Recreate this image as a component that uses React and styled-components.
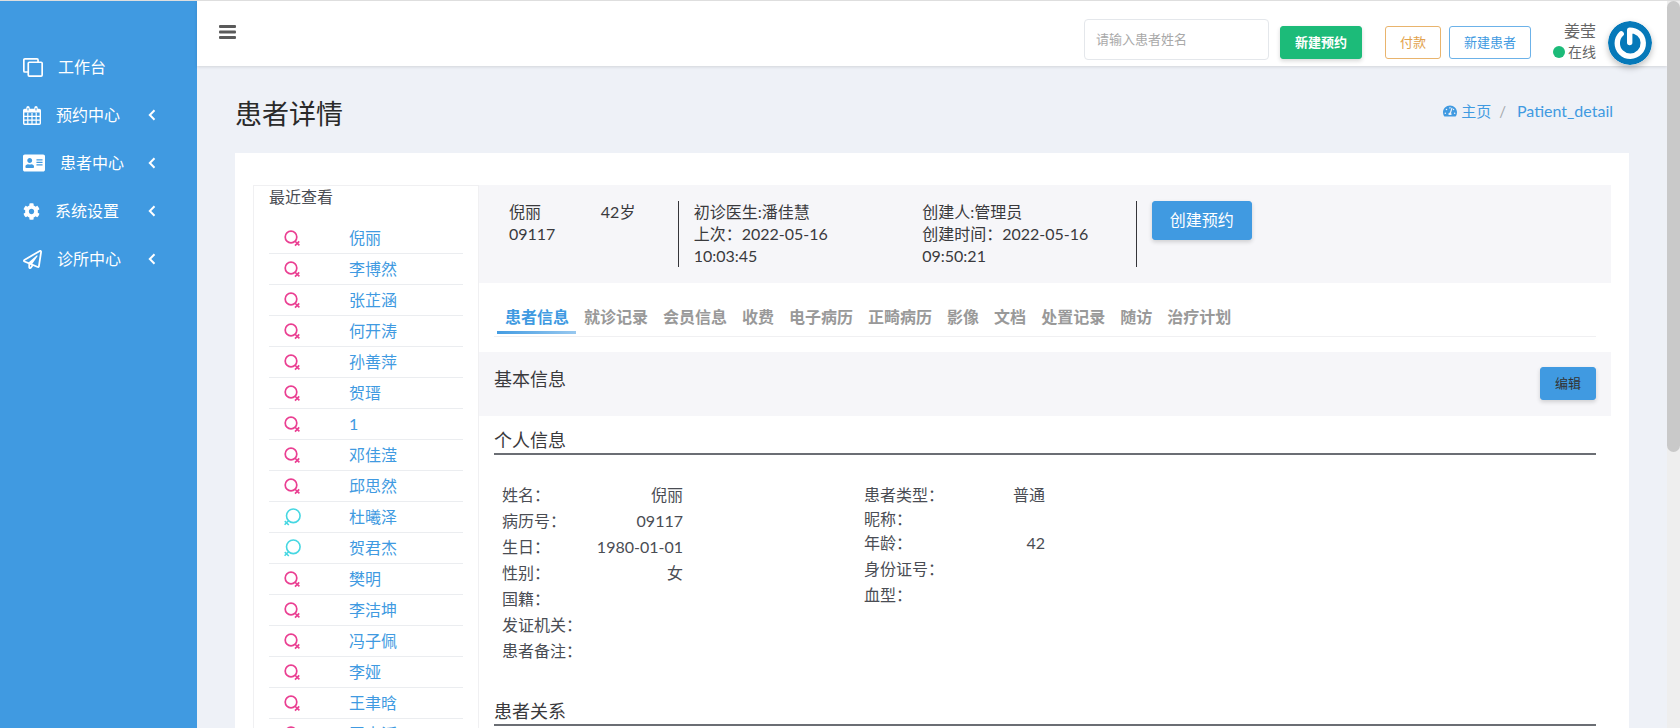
import React from "react";
import styled, { createGlobalStyle } from "styled-components";
import { FaAddressCard, FaCog, FaRegPaperPlane, FaTachometerAlt } from "react-icons/fa";

const GlobalStyle = createGlobalStyle`
  * {
    box-sizing: border-box;
  }

  body {
    margin: 0;
    background: #eef1f7;
    color: #4a4d54;
    font-family: Lato, "Noto Sans CJK SC", sans-serif;
    font-size: 16px;
    line-height: 22px;
  }

  h1, h2, h3, ul, dl, dd {
    margin: 0;
    padding: 0;
    font-weight: 400;
  }

  ul {
    list-style: none;
  }

  a {
    color: #409ae1;
    text-decoration: none;
  }

  button, input {
    font-family: inherit;
  }
`;

const PageStyle = styled.div`
  display: flex;
  height: 100vh;
  overflow: hidden;
  border-top: 1px solid #dedede;
`;

const SidebarStyle = styled.nav`
  flex: 0 0 197px;
  padding-top: 42px;
  background: #409ae1;
`;

const MenuItemStyle = styled.a`
  display: flex;
  align-items: center;
  height: 48px;
  padding: 0 41px 0 23px;
  color: #fff;

  span {
    flex: 1;
    margin-left: 15px;
  }
`;

const ContentStyle = styled.div`
  display: flex;
  flex: 1;
  flex-direction: column;
  min-width: 0;
`;

const HeaderStyle = styled.header`
  display: flex;
  flex: 0 0 65px;
  align-items: center;
  padding: 12px 15px 0 22px;
  background: #fff;
  box-shadow: 0 1px 3px rgba(0, 0, 0, 0.12);
`;

const ToggleStyle = styled.button`
  display: flex;
  margin: 0 auto 16px 0;
  padding: 0;
  border: 0;
  background: none;
`;

const SearchStyle = styled.input`
  width: 185px;
  height: 41px;
  margin-right: 11px;
  padding: 0 11px 2px;
  border: 1px solid #e4e7eb;
  border-radius: 4px;
  font-size: 13px;

  &::placeholder {
    color: #a9a9a9;
  }
`;

const ButtonStyle = styled.button`
  height: ${(props) => (props.$large ? 39 : 33)}px;
  padding: 0 ${(props) => (props.$large ? 17 : 14)}px 3px;
  border: 1px solid ${(props) => props.$border || props.$fill};
  border-radius: 3px;
  background: ${(props) => props.$fill || "#fff"};
  box-shadow: ${(props) => (props.$fill ? "0 2px 4px rgba(0, 0, 0, 0.16)" : "none")};
  color: ${(props) => props.$color};
  font-size: ${(props) => (props.$large ? 16 : 13)}px;
  font-weight: ${(props) => (props.$bold ? 700 : 400)};
  white-space: nowrap;
`;

const ButtonsStyle = styled.div`
  display: flex;
  align-items: center;
  gap: 8px;
  margin: 6px 22px 0 0;

  button:first-child {
    margin-right: 15px;
  }
`;

const UserStyle = styled.div`
  display: flex;
  flex-direction: column;
  align-items: flex-end;
  margin: 3px 12px 0 0;
  color: #666;
  line-height: 21px;
`;

const StatusStyle = styled.span`
  display: flex;
  align-items: center;
  gap: 3px;
  font-size: 14px;

  &::before {
    content: "";
    width: 12px;
    height: 12px;
    border-radius: 50%;
    background: #1cbb79;
  }
`;

const AvatarStyle = styled.svg`
  margin-top: 6px;
  border-radius: 50%;
  box-shadow: 0 3px 6px rgba(0, 0, 0, 0.25);
`;

const MainStyle = styled.main`
  display: flex;
  flex: 1;
  flex-direction: column;
  min-height: 0;
  padding: 0 38px;
`;

const TitleRowStyle = styled.div`
  display: flex;
  flex: 0 0 87px;
  align-items: center;
  justify-content: space-between;
  padding: 8px 16px 0 0;

  h1 {
    color: #2a2a2a;
    font-size: 27px;
    line-height: 32px;
  }
`;

const BreadcrumbStyle = styled.div`
  display: flex;
  align-items: center;
  margin-bottom: 5px;
  color: #a5a9ad;
  font-size: 15px;

  a {
    display: flex;
    align-items: center;
    gap: 4px;
  }

  a:last-child {
    font-size: 16px;
  }

  > span {
    margin: 0 11px 0 8px;
  }
`;

const CardStyle = styled.section`
  display: flex;
  flex: 1;
  align-items: flex-start;
  min-height: 0;
  padding: 32px 18px 0;
  overflow: hidden;
  background: #fff;
`;

const RecentStyle = styled.aside`
  flex: 0 0 226px;
  padding: 0 15px;
  border: 1px solid #f0f0f2;

  h2 {
    margin-bottom: 16px;
    font-size: 16px;
    line-height: 21px;
  }
`;

const RecentRowStyle = styled.li`
  display: flex;
  align-items: center;
  height: 31px;
  padding-left: 15px;
  border-bottom: 1px solid #ebedf0;

  a {
    margin-left: 48px;
  }
`;

const DetailStyle = styled.div`
  flex: 1;
  min-width: 0;
`;

const SummaryStyle = styled.div`
  display: grid;
  grid-template-columns: 1fr 1fr 5fr 5fr;
  padding: 16px 15px;
  background: #f6f6f9;
  color: #3a3a3d;
`;

const SummaryCellStyle = styled.div`
  padding: 0 15px;
`;

const VisitStyle = styled.div`
  display: grid;
  grid-template-columns: 1fr 1fr;
  border: solid #35353a;
  border-width: 0 1px;
`;

const TabsStyle = styled.div`
  display: flex;
  height: 54px;
  margin: 0 15px 15px;
  padding: 17px 3px 2px;
  border-bottom: 1px solid #f0f0f2;
`;

const TabStyle = styled.button`
  padding: 0 7px 0 8px;
  border: 0;
  border-bottom: 3px solid transparent;
  border-image: ${(props) =>
    props.$active ? "linear-gradient(90deg, #409ae1, #9bcaf0) 3" : "none"};
  background: none;
  color: ${(props) => (props.$active ? "#409ae1" : "#999")};
  font-size: 16px;
  font-weight: 700;
  white-space: nowrap;
`;

const SectionBarStyle = styled.div`
  display: flex;
  align-items: flex-start;
  justify-content: space-between;
  height: 64px;
  padding: 15px;
  background: #f6f6f9;

  h2 {
    color: #3a3a3d;
    font-size: 18px;
    line-height: 24px;
  }
`;

const SectionTitleStyle = styled.h3`
  margin: 12px 15px 27px;
  border-bottom: 2px solid #6b6e74;
  color: #3a3a3d;
  font-size: 18px;
  line-height: 25px;
`;

const InfoStyle = styled.div`
  display: grid;
  grid-template-columns: repeat(3, 1fr);
  padding: 0 23px 23px;
`;

const InfoRowStyle = styled.div`
  display: flex;
  align-items: center;
  justify-content: space-between;
  width: 50%;
  min-width: 180px;
  height: ${(props) => (props.$short ? 22 : 26)}px;
  white-space: nowrap;
`;

const ScrollbarStyle = styled.div`
  flex: 0 0 13px;
  background: #eee;

  &::before {
    content: "";
    display: block;
    height: 62%;
    border-radius: 7px;
    background: #c9c9c9;
  }
`;

const CloneIcon = () => (
  <svg width="20" height="19" viewBox="0 0 19 18" fill="none" stroke="currentColor" strokeWidth="1.6">
    <rect x="5" y="4" width="13.2" height="13.2" rx="1" />
    <path d="M5 13.3H1.8a1 1 0 0 1-1-1V1.8a1 1 0 0 1 1-1h11.5a1 1 0 0 1 1 1V4" />
  </svg>
);

const CalendarIcon = () => (
  <svg width="18" height="19" viewBox="0 0 18 19" fill="none" stroke="currentColor">
    <rect x="0.7" y="3.5" width="16.6" height="14.8" rx="1" strokeWidth="1.4" />
    <path d="M1 4.8h16" strokeWidth="3.4" />
    <path d="M4.8 7v11M9 7v11M13.2 7v11M1 10.3h16M1 14.2h16" strokeWidth="1.2" />
    <path d="M5 1.7v3M13 1.7v3" strokeWidth="3.4" strokeLinecap="round" />
    <path d="M5 2v2.5M13 2v2.5" stroke="#409ae1" strokeWidth="1" />
  </svg>
);

const AngleIcon = () => (
  <svg width="8" height="12" viewBox="0 0 8 12" fill="none" stroke="currentColor" strokeWidth="2">
    <path d="M6.5 1.2L1.8 6l4.7 4.8" />
  </svg>
);

const FemaleIcon = () => (
  <svg width="17" height="18" viewBox="0 0 17 18" fill="none" stroke="#ea3f92" strokeWidth="1.7">
    <circle cx="7" cy="8" r="5.8" />
    <path d="M10.8 12l4.6 4.4M15.2 12.4l-4.2 4.2" />
  </svg>
);

const MaleIcon = () => (
  <svg width="17" height="18" viewBox="0 0 17 18" fill="none" stroke="#46d7e2" strokeWidth="1.6">
    <circle cx="9.3" cy="7.8" r="6.8" />
    <path d="M4.6 12.8l-4 4M0.8 13.2l4 3.8" />
  </svg>
);

const Avatar = () => (
  <AvatarStyle width="44" height="44" viewBox="0 0 44 44" role="img" aria-label="姜莹">
    <circle cx="22" cy="22" r="22" fill="#0679b9" />
    <path
      d="M13.2 12.9A13 13 0 1 0 31 12.6Q27 9.2 21.7 9.2V21.5"
      fill="none"
      stroke="#fff"
      strokeWidth="5.4"
      strokeLinecap="round"
      strokeLinejoin="round"
    />
  </AvatarStyle>
);

const menu = [
  { label: "工作台", icon: <CloneIcon /> },
  { label: "预约中心", icon: <CalendarIcon />, more: true },
  { label: "患者中心", icon: <FaAddressCard size={22} />, more: true },
  { label: "系统设置", icon: <FaCog size={17} />, more: true },
  { label: "诊所中心", icon: <FaRegPaperPlane size={19} />, more: true },
];

const patients = [
  { name: "倪丽" },
  { name: "李博然" },
  { name: "张芷涵" },
  { name: "何开涛" },
  { name: "孙善萍" },
  { name: "贺瑨" },
  { name: "1" },
  { name: "邓佳滢" },
  { name: "邱思然" },
  { name: "杜曦泽", male: true },
  { name: "贺君杰", male: true },
  { name: "樊明" },
  { name: "李洁坤" },
  { name: "冯子佩" },
  { name: "李娅" },
  { name: "王聿晗" },
  { name: "王志滔" },
];

const tabs = [
  "患者信息",
  "就诊记录",
  "会员信息",
  "收费",
  "电子病历",
  "正畸病历",
  "影像",
  "文档",
  "处置记录",
  "随访",
  "治疗计划",
];

const infoLeft = [
  ["姓名", "倪丽"],
  ["病历号", "09117"],
  ["生日", "1980-01-01"],
  ["性别", "女"],
  ["国籍", ""],
  ["发证机关", ""],
  ["患者备注", ""],
];

const infoRight = [
  ["患者类型", "普通"],
  ["昵称", ""],
  ["年龄", "42"],
  ["身份证号", ""],
  ["血型", ""],
];

const InfoList = ({ rows, shortRow }) => (
  <dl>
    {rows.map(([label, value]) => (
      <InfoRowStyle key={label} $short={label === shortRow}>
        <dt>{label}：</dt>
        <dd>{value}</dd>
      </InfoRowStyle>
    ))}
  </dl>
);

const Sidebar = () => (
  <SidebarStyle>
    {menu.map((item) => (
      <MenuItemStyle href="#" key={item.label}>
        {item.icon}
        <span>{item.label}</span>
        {item.more && <AngleIcon />}
      </MenuItemStyle>
    ))}
  </SidebarStyle>
);

const Header = () => (
  <HeaderStyle>
    <ToggleStyle aria-label="菜单">
      <svg width="17" height="14" viewBox="0 0 17 14" fill="#5a5a5a">
        <rect width="17" height="3" rx="1" />
        <rect y="5.5" width="17" height="3" rx="1" />
        <rect y="11" width="17" height="3" rx="1" />
      </svg>
    </ToggleStyle>
    <SearchStyle type="text" placeholder="请输入患者姓名" aria-label="请输入患者姓名" />
    <ButtonsStyle>
      <ButtonStyle $fill="#1cbb79" $color="#fff" $bold>
        新建预约
      </ButtonStyle>
      <ButtonStyle $border="#e9b46d" $color="#e2a24c">
        付款
      </ButtonStyle>
      <ButtonStyle $border="#6cb2e9" $color="#409ae1">
        新建患者
      </ButtonStyle>
    </ButtonsStyle>
    <UserStyle>
      <span>姜莹</span>
      <StatusStyle>在线</StatusStyle>
    </UserStyle>
    <Avatar />
  </HeaderStyle>
);

const Recent = () => (
  <RecentStyle>
    <h2>最近查看</h2>
    <ul>
      {patients.map((patient) => (
        <RecentRowStyle key={patient.name}>
          {patient.male ? <MaleIcon /> : <FemaleIcon />}
          <a href="#">{patient.name}</a>
        </RecentRowStyle>
      ))}
    </ul>
  </RecentStyle>
);

const Summary = () => (
  <SummaryStyle>
    <SummaryCellStyle>
      <div>倪丽</div>
      <div>09117</div>
    </SummaryCellStyle>
    <SummaryCellStyle>42岁</SummaryCellStyle>
    <VisitStyle>
      <SummaryCellStyle>
        <div>初诊医生:潘佳慧</div>
        <div>上次：2022-05-16 10:03:45</div>
      </SummaryCellStyle>
      <SummaryCellStyle>
        <div>创建人:管理员</div>
        <div>创建时间：2022-05-16 09:50:21</div>
      </SummaryCellStyle>
    </VisitStyle>
    <SummaryCellStyle>
      <ButtonStyle $fill="#409ae1" $color="#fff" $large>
        创建预约
      </ButtonStyle>
    </SummaryCellStyle>
  </SummaryStyle>
);

const App = () => {
  return (
    <>
      <GlobalStyle />
      <PageStyle>
        <Sidebar />
        <ContentStyle>
          <Header />
          <MainStyle>
            <TitleRowStyle>
              <h1>患者详情</h1>
              <BreadcrumbStyle>
                <a href="#">
                  <FaTachometerAlt size={14} />
                  主页
                </a>
                <span>/</span>
                <a href="#">Patient_detail</a>
              </BreadcrumbStyle>
            </TitleRowStyle>
            <CardStyle>
              <Recent />
              <DetailStyle>
                <Summary />
                <TabsStyle>
                  {tabs.map((tab, index) => (
                    <TabStyle key={tab} $active={index === 0}>
                      {tab}
                    </TabStyle>
                  ))}
                </TabsStyle>
                <SectionBarStyle>
                  <h2>基本信息</h2>
                  <ButtonStyle $fill="#409ae1" $color="#333">
                    编辑
                  </ButtonStyle>
                </SectionBarStyle>
                <SectionTitleStyle>个人信息</SectionTitleStyle>
                <InfoStyle>
                  <InfoList rows={infoLeft} />
                  <InfoList rows={infoRight} shortRow="昵称" />
                </InfoStyle>
                <SectionTitleStyle>患者关系</SectionTitleStyle>
              </DetailStyle>
            </CardStyle>
          </MainStyle>
        </ContentStyle>
        <ScrollbarStyle />
      </PageStyle>
    </>
  );
};

export default App;
